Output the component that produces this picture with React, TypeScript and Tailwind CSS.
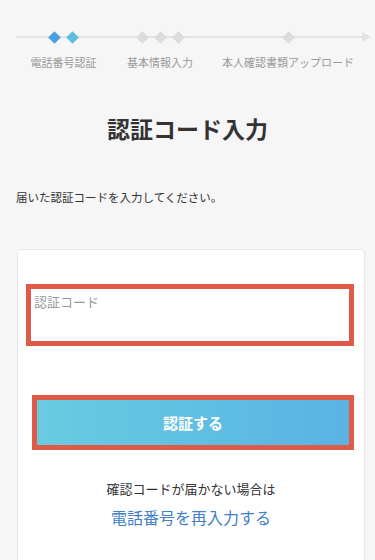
import React from 'react';

const font = { fontFamily: '"Noto Sans CJK JP", "Noto Sans", sans-serif' };

function Diamond({ color }: { color: string }) {
  return <div className={`w-[9px] h-[9px] rotate-45 ${color}`} />;
}

const steps = [
  { label: '電話番号認証', width: 'w-[95px]', dots: ['bg-[#4a9fe0]', 'bg-[#5cbde3]'] },
  { label: '基本情報入力', width: 'w-[98px]', dots: ['bg-[#dcdcdc]', 'bg-[#dcdcdc]', 'bg-[#dcdcdc]'] },
  { label: '本人確認書類アップロード', width: 'w-[158px]', dots: ['bg-[#dcdcdc]'] },
];

export default function App() {
  return (
    <div className="w-[375px] h-[560px] overflow-hidden bg-[#f6f6f6]" style={font}>
      {/* stepper */}
      <div className="relative pt-[31px] pl-[16px]">
        <div className="absolute left-[16px] top-[36px] w-[348px] h-[2px] bg-[#e3e3e3]" />
        <div className="absolute left-[362px] top-[32px] w-0 h-0 border-y-[5px] border-y-transparent border-l-[9px] border-l-[#e3e3e3]" />
        <div className="relative flex">
          {steps.map((s) => (
            <div key={s.label} className={`${s.width} flex flex-col items-center`}>
              <div className="h-[12px] flex items-center gap-[9px]">
                {s.dots.map((c, i) => (
                  <Diamond key={i} color={c} />
                ))}
              </div>
              <div className="mt-[11px] text-[11px] leading-[16px] text-[#9a9a9a] whitespace-nowrap">{s.label}</div>
            </div>
          ))}
        </div>
      </div>

      <h1 className="mt-[42px] text-center text-[23px] leading-[32px] font-bold text-[#333]">認証コード入力</h1>

      <p className="mt-[45px] px-[16px] text-[11.5px] leading-[16px] text-[#333]">届いた認証コードを入力してください。</p>

      <div className="mt-[44px] ml-[17px] w-[348px] h-[320px] bg-white border border-[#e9e9e9] rounded-[4px] pt-[34px] pl-[8px]">
        <div className="w-[328px] h-[62px] border-[5px] border-[#df5a47] pl-[3px] pt-[5px]">
          <div className="text-[13px] leading-[16px] text-[#999]">認証コード</div>
        </div>

        <div className="mt-[49px] ml-[6px] w-[322px] h-[55px] border-[5px] border-[#df5a47]">
          <div className="h-full flex items-center justify-center bg-gradient-to-r from-[#6acbe0] to-[#59b3e4]">
            <span className="text-white text-[15px] font-bold leading-[20px]">認証する</span>
          </div>
        </div>

        <div className="pr-[8px]">
          <p className="mt-[29px] text-center text-[13px] leading-[20px] text-[#333]">確認コードが届かない場合は</p>
          <p className="mt-[6px] text-center text-[16px] leading-[24px] text-[#3f80c9]">電話番号を再入力する</p>
        </div>
      </div>
    </div>
  );
}
